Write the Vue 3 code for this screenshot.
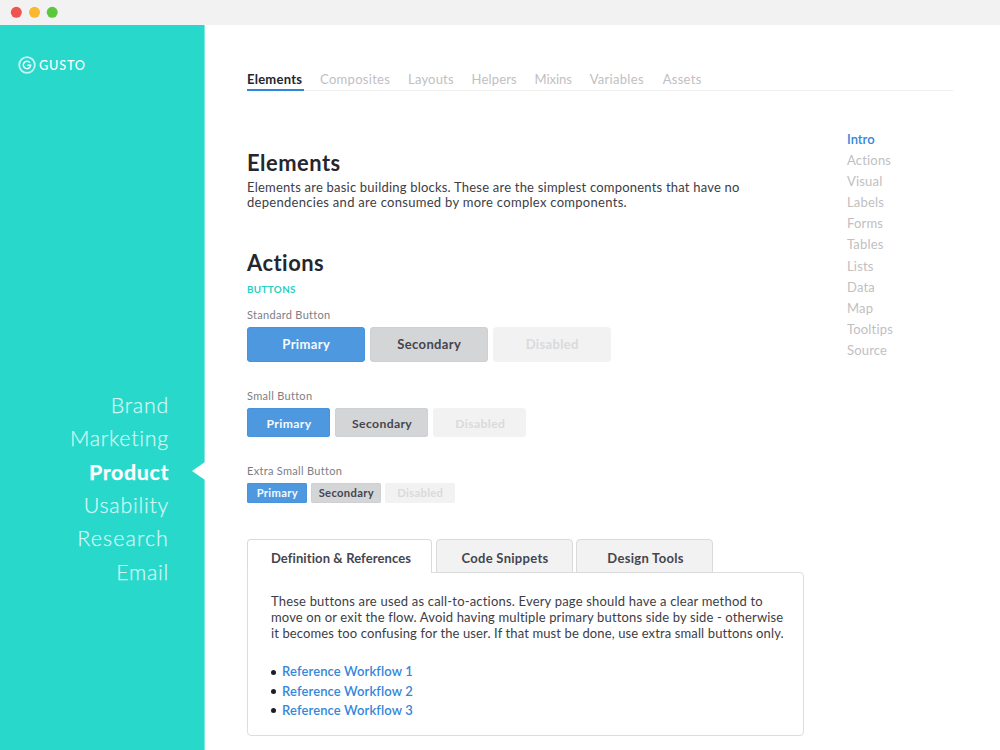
<script setup>
const sections = ['Brand', 'Marketing', 'Product', 'Usability', 'Research', 'Email']
const pages = ['Elements', 'Composites', 'Layouts', 'Helpers', 'Mixins', 'Variables', 'Assets']
const anchors = ['Intro', 'Actions', 'Visual', 'Labels', 'Forms', 'Tables', 'Lists', 'Data', 'Map', 'Tooltips', 'Source']
const sizes = [
  { key: 'standard', label: 'Standard Button' },
  { key: 'small', label: 'Small Button' },
  { key: 'xsmall', label: 'Extra Small Button' },
]
const kinds = ['Primary', 'Secondary', 'Disabled']
const tabs = ['Definition & References', 'Code Snippets', 'Design Tools']
const links = ['Reference Workflow 1', 'Reference Workflow 2', 'Reference Workflow 3']
</script>

<template>
  <div class="window">
    <header class="titlebar">
      <svg width="64" height="25" viewBox="0 0 64 25">
        <circle cx="16.3" cy="12.3" r="5.5" fill="#f0544f" />
        <circle cx="34.5" cy="12.3" r="5.5" fill="#fab82e" />
        <circle cx="52.2" cy="12.3" r="5.5" fill="#5ac83d" />
      </svg>
    </header>
    <div class="body">
      <aside class="sidebar">
        <div class="logo">
          <svg width="18" height="18" viewBox="0 0 18 18" fill="none" stroke="#fff">
            <circle cx="9" cy="9" r="7.8" stroke-width="1.8" opacity=".75" />
            <path d="M11.9 6.6A3.7 3.7 0 1 0 12.7 9.3H9.4" stroke-width="1.4" />
          </svg>
          <span>GUSTO</span>
        </div>
        <nav class="sections">
          <a v-for="s in sections" :key="s" :class="[s.toLowerCase(), { active: s === 'Product' }]">{{ s }}</a>
        </nav>
      </aside>
      <main class="main">
        <nav class="pages">
          <a v-for="p in pages" :key="p" :class="[p.toLowerCase(), { active: p === 'Elements' }]">{{ p }}</a>
        </nav>
        <div class="columns">
          <div class="content">
            <h1>Elements</h1>
            <p class="intro">
              <span class="l1">Elements are basic building blocks. These are the simplest components that have no</span>
              <span class="l2">dependencies and are consumed by more complex components.</span>
            </p>
            <h1 class="actions">Actions</h1>
            <h2>BUTTONS</h2>
            <section v-for="s in sizes" :key="s.key" :class="['group', s.key]">
              <h3>{{ s.label }}</h3>
              <div class="row">
                <button v-for="k in kinds" :key="k" :class="k.toLowerCase()">{{ k }}</button>
              </div>
            </section>
            <div class="tabs">
              <div v-for="(t, i) in tabs" :key="t" :class="['tab', { current: i === 0 }]">{{ t }}</div>
            </div>
            <div class="panel">
              <p>
                <span class="p1">These buttons are used as call-to-actions. Every page should have a clear method to</span>
                <span class="p2">move on or exit the flow. Avoid having multiple primary buttons side by side - otherwise</span>
                <span class="p3">it becomes too confusing for the user. If that must be done, use extra small buttons only.</span>
              </p>
              <ul>
                <li v-for="l in links" :key="l"><a>{{ l }}</a></li>
              </ul>
            </div>
          </div>
          <nav class="anchors">
            <a v-for="a in anchors" :key="a" :class="{ active: a === 'Intro' }">{{ a }}</a>
          </nav>
        </div>
      </main>
    </div>
  </div>
</template>

<style>
body { margin: 0; background: #fff; }
</style>

<style scoped>
.window { width: 1000px; height: 750px; overflow: hidden; display: flex; flex-direction: column; font-family: Lato, "Open Sans", sans-serif; font-size: 13px; color: #3d3d45; background: #fff; }
.titlebar { height: 25px; flex: none; background: #f2f2f2; }
.titlebar svg { display: block; }
.body { flex: 1; display: flex; min-height: 0; }
.sidebar { width: 205px; box-sizing: border-box; flex: none; background: #27d8cb; border-right: 1px solid #7de8e0; }
.logo { display: flex; align-items: center; gap: 3px; margin: 30.5px 0 0 18px; height: 18px; color: #fff; }
.logo span { font-size: 12.7px; letter-spacing: .8px; font-weight: 500; line-height: 18px; }
.sections { margin-top: 315.4px; display: flex; flex-direction: column; padding-right: 35px; }
.sections a { position: relative; height: 33.35px; line-height: 33.35px; text-align: right; font-size: 21.4px; font-weight: 300; letter-spacing: .75px; color: #d2f8f4; -webkit-text-stroke: .25px #d2f8f4; }
.sections .research { letter-spacing: 1.1px; }
.sections .active { font-weight: 700; color: #fff; -webkit-text-stroke-color: #fff; letter-spacing: .65px; }
.sections .active::after { content: ""; position: absolute; right: -36px; top: 6.6px; border: solid transparent; border-width: 9px 13px 9px 0; border-right-color: #fff; }
.main { flex: 1; padding: 0 47px 0 42px; }
.pages { display: flex; gap: 17.8px; margin-top: 42px; height: 23px; border-bottom: 1px solid #efeff0; }
.pages a { line-height: 24px; height: 22px; color: #bfc0c2; letter-spacing: .3px; }
.pages .active { font-weight: 700; color: #25252e; letter-spacing: .25px; border-bottom: 2px solid #2f87dc; padding-right: 2px; margin-right: -2px; }
.pages .helpers { letter-spacing: .15px; }
.pages .layouts { letter-spacing: .2px; }
.pages .mixins { letter-spacing: -.05px; }
.pages .assets { margin-left: 1px; }
.columns { display: flex; justify-content: space-between; }
.content { width: 558px; }
h1, h2, h3, p, ul { margin: 0; padding: 0; }
h1 { font-size: 21.9px; font-weight: 700; line-height: 26px; letter-spacing: .5px; color: #26262e; margin-top: 58.5px; }
.intro { margin-top: 4px; line-height: 15.5px; }
.intro span, .panel p span { display: block; white-space: nowrap; }
.l1 { letter-spacing: .21px; }
.l2 { letter-spacing: .29px; }
h1.actions { margin-top: 39px; }
h2 { font-size: 9.8px; line-height: 12px; font-weight: 700; letter-spacing: .4px; color: #1ed0c3; margin-top: 7.5px; }
h3 { font-size: 11px; line-height: 14px; font-weight: 400; letter-spacing: .3px; color: #7d7e85; }
.group { height: 81.5px; margin-top: 12.5px; }
.row { display: flex; gap: 5.5px; margin-top: 5px; }
button { border: 0; border-radius: 4px; padding: 0 0 0 1px; font-family: inherit; font-size: 13px; font-weight: 700; letter-spacing: .36px; width: 117.5px; height: 35px; }
.primary { background: #4e98df; box-shadow: inset 0 0 0 1px #4794dd; color: #f4faff; }
.secondary { background: #d4d5d7; box-shadow: inset 0 0 0 1px #cfd0d3; color: #45454d; }
.disabled { background: #f2f2f2; color: #d9dadc; }
.small, .xsmall { margin-top: 0; }
.small { height: 74.5px; }
.small .row { gap: 5px; }
.small button { width: 93.2px; height: 29px; padding-top: 2px; font-size: 12.2px; border-radius: 3px; }
.small .primary { width: 83px; }
.xsmall { height: 75.5px; }
.xsmall .row { gap: 4.2px; }
.xsmall button { width: 69.8px; height: 20.5px; font-size: 11.2px; border-radius: 2px; letter-spacing: .34px; }
.xsmall .primary { width: 59.7px; }
.tabs { display: flex; gap: 3.5px; margin-bottom: -1px; }
.tab { position: relative; box-sizing: border-box; width: 137px; height: 34px; line-height: 37px; text-align: center; font-weight: 700; letter-spacing: .3px; border: 1px solid #d9dadc; border-radius: 4px 4px 0 0; background: #f2f2f3; color: #45454d; padding-left: 2px; }
.current { width: 185px; background: #fff; border-bottom: 0; letter-spacing: .1px; padding-left: 3px; }
.panel { box-sizing: border-box; width: 557px; height: 164px; border: 1px solid #dcdddf; border-radius: 0 4px 4px 4px; padding: 21.2px 0 0 23px; }
.panel p { line-height: 15.9px; }
.p1 { letter-spacing: .19px; }
.p2 { letter-spacing: .15px; }
.p3 { letter-spacing: .12px; }
ul { list-style: none; margin-top: 20.5px; }
li { display: flex; align-items: center; gap: 6px; height: 19.2px; line-height: 19.2px; }
li::before { content: ""; width: 5px; height: 5px; border-radius: 50%; background: #1d1d25; }
li a { font-weight: 600; color: #3487db; letter-spacing: .12px; }
.anchors { width: 106px; display: flex; flex-direction: column; margin-top: 37.7px; }
.anchors a { height: 21.17px; line-height: 21.17px; color: #bfc0c2; letter-spacing: .18px; }
.anchors .active { color: #3186dc; font-weight: 600; letter-spacing: 0; }
</style>
